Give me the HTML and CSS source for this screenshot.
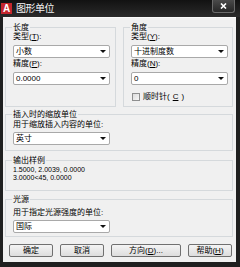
FILE: index.html
```html
<!DOCTYPE html>
<html lang="zh-CN">
<head>
    <meta charset="UTF-8">
    <meta name="viewport" content="width=device-width, initial-scale=1.0">
    <title>图形单位</title>
    <link rel="stylesheet" href="styles.css">
</head>
<body>
    <div class="window">
        <div class="titlebar">
            <span class="app-icon">A</span>
            <span class="title">图形单位</span>
            <button class="close" type="button">
                <svg width="7" height="6" viewBox="0 0 7 6"><path d="M1 0.5 L6 5.5 M6 0.5 L1 5.5" stroke="#fff" stroke-width="1.6"/></svg>
            </button>
        </div>

        <div class="client">
            <div class="top">
                <fieldset class="group length">
                    <legend>长度</legend>
                    <span class="field-label">类型(<u>T</u>):</span>
                    <div class="select"><span>小数</span><i class="arrow"></i></div>
                    <span class="field-label">精度(<u>P</u>):</span>
                    <div class="select"><span>0.0000</span><i class="arrow"></i></div>
                </fieldset>

                <fieldset class="group angle">
                    <legend>角度</legend>
                    <span class="field-label">类型(<u>Y</u>):</span>
                    <div class="select"><span>十进制度数</span><i class="arrow"></i></div>
                    <span class="field-label">精度(<u>N</u>):</span>
                    <div class="select"><span>0</span><i class="arrow"></i></div>
                    <label class="check"><span class="box"></span>顺时针(<u>C</u>)</label>
                </fieldset>
            </div>

            <fieldset class="group wide insert">
                <legend>插入时的缩放单位</legend>
                <span class="field-label">用于缩放插入内容的单位:</span>
                <div class="select"><span>英寸</span><i class="arrow"></i></div>
            </fieldset>

            <fieldset class="group wide sample">
                <legend>输出样例</legend>
                <p>1.5000, 2.0039, 0.0000</p>
                <p>3.0000&lt;45, 0.0000</p>
            </fieldset>

            <fieldset class="group wide light">
                <legend>光源</legend>
                <span class="field-label">用于指定光源强度的单位:</span>
                <div class="select"><span>国际</span><i class="arrow"></i></div>
            </fieldset>

            <div class="buttons">
                <button type="button" class="btn">确定</button>
                <button type="button" class="btn">取消</button>
                <button type="button" class="btn btn-wide">方向(<u>D</u>)...</button>
                <button type="button" class="btn">帮助(<u>H</u>)</button>
            </div>
        </div>
    </div>
</body>
</html>
```

FILE: styles.css
```css
* {
    box-sizing: border-box;
}
body {
    margin: 0;
    font-family: "Liberation Sans", "Noto Sans CJK SC", sans-serif;
    font-size: 8px;
    line-height: 9px;
    color: #000;
    background: #1c1c1c;
}
.window {
    width: 240px;
    height: 267px;
    display: flex;
    flex-direction: column;
    background: #1f1f1f;
}
.titlebar {
    height: 17px;
    flex: none;
    display: flex;
    align-items: flex-start;
    background: linear-gradient(#121212, #2a2a2a);
    color: #fff;
}
.app-icon {
    width: 11px;
    height: 11px;
    margin: 3px 0 0 1px;
    background: #c3262d;
    color: #fff;
    font: bold 10px/11px "Liberation Sans", sans-serif;
    text-align: center;
}
.title {
    margin: 3px 0 0 4px;
    font-size: 10px;
    line-height: 11px;
    letter-spacing: -0.5px;
    color: #f2f2f2;
}
.close {
    margin: 0 5px 0 auto;
    width: 23px;
    height: 13px;
    padding: 0;
    border: 1px solid #6a6a6a;
    border-top: none;
    border-radius: 0 0 3px 3px;
    background: linear-gradient(#4a4a4a, #262626);
    display: flex;
    align-items: center;
    justify-content: center;
}
.client {
    flex: 1;
    margin: 0 4px 5px 3px;
    padding: 6px 3px 0 2px;
    background: #f0f0f0;
    box-shadow: inset 0 1px 0 #fafafa;
    display: flex;
    flex-direction: column;
}
.top {
    display: flex;
    gap: 7px;
}
.group {
    margin: 0;
    padding: 0 4px 5px 7px;
    border: 1px solid #d5d9dc;
    min-width: 0;
}
.group legend {
    padding: 0 1px;
    margin-left: -1px;
    line-height: 9px;
}
.length {
    width: 111px;
}
.angle {
    flex: 1;
}
.field-label {
    display: block;
    padding-top: 1px;
    height: 9px;
    line-height: 8px;
}
.select {
    width: 97px;
    height: 13px;
    margin-top: 4px;
    padding: 0 2px;
    border: 1px solid #a9a9a9;
    border-radius: 2px;
    background: #fff;
    line-height: 11px;
    display: flex;
    align-items: center;
    justify-content: space-between;
}
.select + .field-label {
    margin-top: 1px;
}
.arrow {
    width: 0;
    height: 0;
    margin-right: 1px;
    border-left: 3px solid transparent;
    border-right: 3px solid transparent;
    border-top: 3px solid #111;
}
.check {
    display: flex;
    align-items: center;
    gap: 3px;
    margin: 7px 0 0 1px;
}
.check .box {
    width: 8px;
    height: 8px;
    border: 1px solid #8e8f8f;
    background: linear-gradient(135deg, #dcdcdc, #f6f6f6);
}
.insert {
    margin-top: 3px;
}
.insert .select,
.light .select {
    margin-top: 3px;
}
.insert .field-label {
    margin-top: 1px;
}
.sample {
    margin-top: 5px;
    padding-bottom: 9px;
}
.sample p {
    margin: 0;
    height: 8px;
    padding-top: 1px;
    font-size: 7px;
    line-height: 7px;
}
.light {
    margin-top: 4px;
    padding-bottom: 3px;
}
.light .field-label {
    margin-top: 4px;
}
.buttons {
    display: flex;
    gap: 7px;
    margin: 7px 0 0 4px;
}
.btn {
    width: 44px;
    height: 13px;
    padding: 0;
    border: 1px solid #707070;
    border-radius: 2px;
    background: linear-gradient(#f4f4f4, #dddddd);
    font-family: inherit;
    font-size: 8px;
    line-height: 11px;
    color: #000;
}
.btn-wide {
    width: 70px;
}
```
